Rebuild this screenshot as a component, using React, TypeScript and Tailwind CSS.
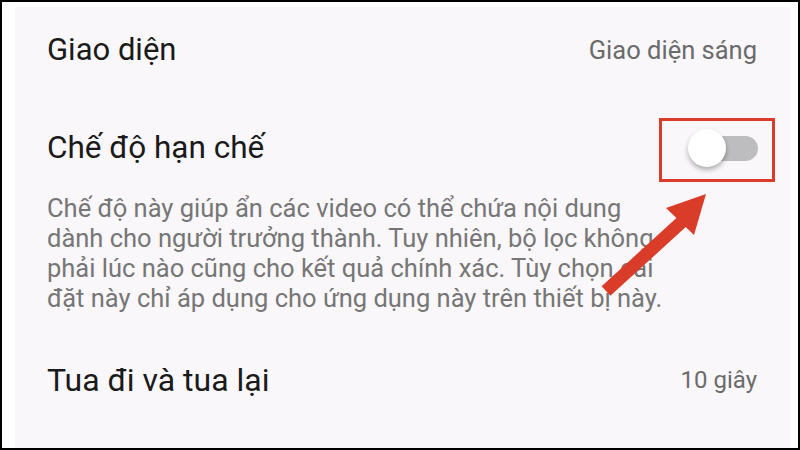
import React from 'react';

const font = { fontFamily: 'Roboto, "Noto Sans", sans-serif' };

function Toggle() {
  return (
    <div className="relative flex h-[38px] w-[70px] items-center">
      <div className="ml-[4px] h-[25px] w-[66px] rounded-full bg-[#bdbcbf]" />
      <div className="absolute left-0 top-0 h-[38px] w-[38px] rounded-full bg-white shadow-[0_3px_5px_rgba(0,0,0,0.3)]" />
    </div>
  );
}

export default function App() {
  return (
    <div
      className="relative h-[450px] w-[800px] overflow-hidden border-2 border-black bg-white pl-[13px] pr-[8px] pt-[5px]"
      style={font}
    >
      <div className="h-full w-full bg-[#f9f7fa] px-[32px] text-[#1a1a1a]">
        <div className="flex h-[86px] items-center justify-between">
          <span className="text-[31px]">Giao diện</span>
          <span className="mr-[1px] text-[25.5px] text-[#6b6b6b]">Giao diện sáng</span>
        </div>

        <div className="mt-[25px] flex h-[60px] items-center justify-between">
          <span className="text-[31.5px]">Chế độ hạn chế</span>
          <Toggle />
        </div>

        <p className="mt-[15px] w-[700px] whitespace-nowrap text-[25.5px] leading-[30px] text-[#767676]">
          Chế độ này giúp ẩn các video có thể chứa nội dung
          <br />
          dành cho người trưởng thành. Tuy nhiên, bộ lọc không
          <br />
          phải lúc nào cũng cho kết quả chính xác. Tùy chọn cài
          <br />
          đặt này chỉ áp dụng cho ứng dụng này trên thiết bị này.
        </p>

        <div className="mt-[37px] flex h-[60px] items-center justify-between">
          <span className="text-[32px]">Tua đi và tua lại</span>
          <span className="mr-[1px] text-[24px] text-[#6b6b6b]">10 giây</span>
        </div>
      </div>

      {/* annotation: red box round the switch */}
      <div className="absolute left-[657px] top-[116px] h-[64px] w-[116px] border-[3px] border-[#d93d2a]" />

      {/* annotation: arrow */}
      <svg className="pointer-events-none absolute left-0 top-0" width="800" height="450" viewBox="0 0 800 450">
        <line x1="604" y1="289" x2="684" y2="216" stroke="#d93d2a" strokeWidth="13" />
        <polygon points="704,192 664,206 692,233" fill="#d93d2a" />
      </svg>
    </div>
  );
}
